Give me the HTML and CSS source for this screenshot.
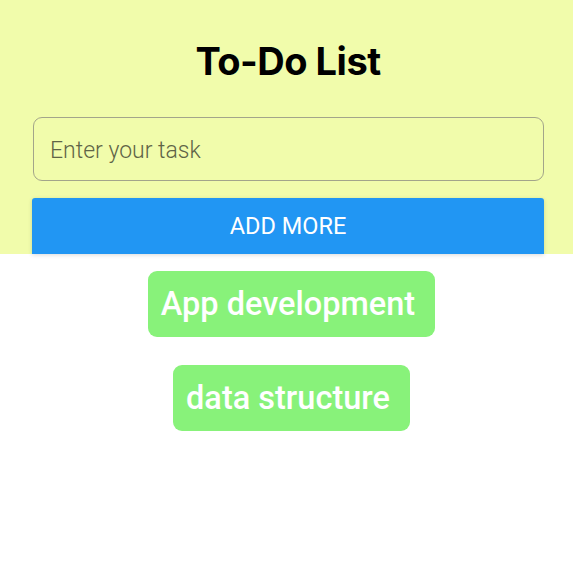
FILE: index.html
```html
<!DOCTYPE html>
<html>
<head>
<meta charset="utf-8">
<link rel="stylesheet" href="styles.css">
</head>
<body>
<div class="header">
  <h1 class="title">To-Do List</h1>
  <div class="field"><span class="placeholder">Enter your task</span></div>
  <div class="button">ADD MORE</div>
</div>
<div class="list">
  <div class="task">App development&nbsp;</div>
  <div class="task">data structure&nbsp;</div>
</div>
</body>
</html>
```
FILE: styles.css
```css
html, body { margin: 0; padding: 0; background: #ffffff; }
body { font-family: Roboto, "Liberation Sans", sans-serif; }
.header {
  background: #f1fcab;
  padding: 38px 29px 0 32px;
  height: 254px;
  box-sizing: border-box;
  display: flex;
  flex-direction: column;
}
.title {
  margin: 0;
  text-align: center;
  font-family: Inter, "Liberation Sans", sans-serif;
  font-weight: 700;
  font-size: 38px;
  line-height: 46px;
  color: #000;
  letter-spacing: -0.5px;
}
.field {
  margin: 33px 0 0 1px;
  height: 64px;
  box-sizing: border-box;
  border: 1.5px solid #a3a58a;
  border-radius: 9px;
  display: flex;
  align-items: center;
  padding-left: 16px;
}
.placeholder {
  font-size: 23px;
  font-weight: 300;
  color: #5f6447;
  padding-top: 3px;
}
.button {
  margin-top: 17px;
  height: 56px;
  background: #2196f3;
  border-radius: 3px 3px 0 0;
  color: #fff;
  font-size: 23.5px;
  font-weight: 400;
  display: flex;
  align-items: center;
  justify-content: center;
  box-shadow: 0 1px 4px rgba(0,0,0,0.15);
}
.list {
  display: flex;
  flex-direction: column;
  align-items: center;
  gap: 28px;
  padding-top: 17px;
  padding-left: 10px;
}
.task {
  background: #88f27a;
  color: #fff;
  font-weight: 500;
  font-size: 32.5px;
  height: 66px;
  border-radius: 9px;
  display: flex;
  align-items: center;
  padding: 0 12px 0 13px;
}
```
